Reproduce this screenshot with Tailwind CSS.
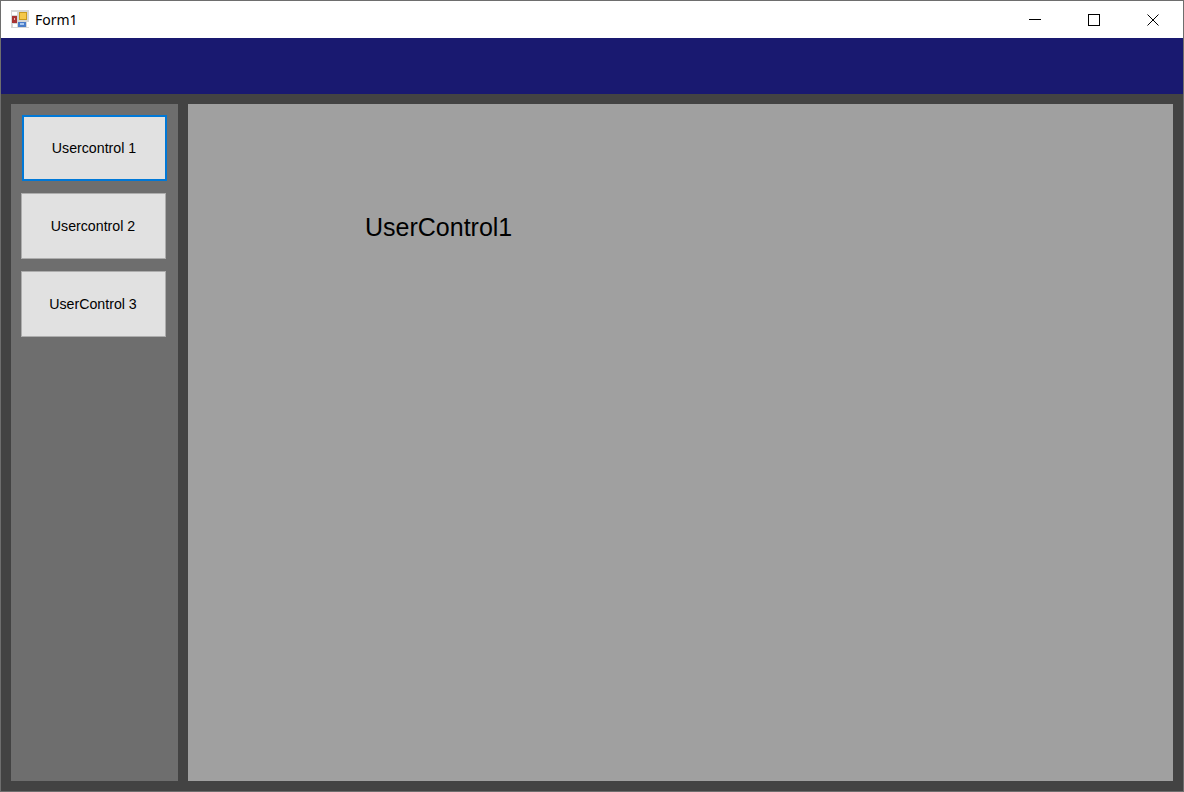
<!DOCTYPE html>
<html>
<head>
<meta charset="utf-8">
<title>Form1</title>
<script src="https://cdn.jsdelivr.net/npm/@tailwindcss/browser@4"></script>
</head>
<body class="w-[1184px] h-[792px] overflow-hidden bg-[#6e6e6e]">
<div class="w-[1182px] h-[790px] ml-px mt-px flex flex-col bg-[#434343]">
  <div class="h-[37px] shrink-0 bg-white flex items-center pl-[10px] font-['Noto_Sans',sans-serif] text-[14px] text-black">
    <svg class="w-[18px] h-[18px] mr-[6px] -mt-[1px]" viewBox="0 0 18 18" shape-rendering="crispEdges">
      <rect width="18" height="18" fill="#d6d6d6"/>
      <rect x="1" y="2" width="5" height="3" fill="#ffffff"/>
      <rect x="8" y="2" width="8" height="8" fill="#c99a1c"/>
      <rect x="9" y="3" width="6" height="6" fill="#f5c84a"/>
      <rect x="1" y="6" width="5" height="7" fill="#a83232"/>
      <rect x="3" y="8" width="1" height="2" fill="#e8b0b0"/>
      <rect x="7" y="12" width="8" height="5" fill="#4a7cc8"/>
      <rect x="9" y="13" width="4" height="2" fill="#a8c8f0"/>
      <rect x="2" y="14" width="4" height="3" fill="#ffffff"/>
      <rect x="16" y="12" width="2" height="5" fill="#ffffff"/>
    </svg>
    <span>Form1</span>
    <div class="ml-auto flex h-full items-center">
      <div class="w-[59px] h-full flex items-center justify-center">
        <svg class="w-3 h-3" viewBox="0 0 12 12"><path d="M0 5.5H12" stroke="#000" stroke-width="1" fill="none"/></svg>
      </div>
      <div class="w-[59px] h-full flex items-center justify-center">
        <svg class="w-3 h-3" viewBox="0 0 12 12"><rect x="0.5" y="0.5" width="11" height="11" stroke="#000" stroke-width="1" fill="none"/></svg>
      </div>
      <div class="w-[60px] h-full flex items-center justify-center">
        <svg class="w-3 h-3" viewBox="0 0 12 12"><path d="M0.5 0.5L11.5 11.5M11.5 0.5L0.5 11.5" stroke="#000" stroke-width="1" fill="none"/></svg>
      </div>
    </div>
  </div>
  <div class="h-14 shrink-0 bg-[#191970]"></div>
  <div class="flex-1 flex gap-[10px] p-[10px] font-['Liberation_Sans',sans-serif] text-black">
    <div class="w-[167px] bg-[#6e6e6e] flex flex-col pl-[10px] pt-[11px] gap-3">
      <button class="w-[145px] h-[66px] ml-px bg-[#e1e1e1] border-2 border-[#0078d7] text-[14.2px] leading-[16px] pr-px">Usercontrol 1</button>
      <button class="w-[145px] h-[66px] bg-[#e1e1e1] border border-[#adadad] text-[14.2px] leading-[16px] pr-px">Usercontrol 2</button>
      <button class="w-[145px] h-[66px] bg-[#e1e1e1] border border-[#adadad] text-[14.2px] leading-[16px] pr-px">UserControl 3</button>
    </div>
    <div class="flex-1 bg-[#a0a0a0] pl-[177px] pt-[108px]">
      <span class="text-[25px] leading-[30px] block">UserControl1</span>
    </div>
  </div>
</div>
</body>
</html>
